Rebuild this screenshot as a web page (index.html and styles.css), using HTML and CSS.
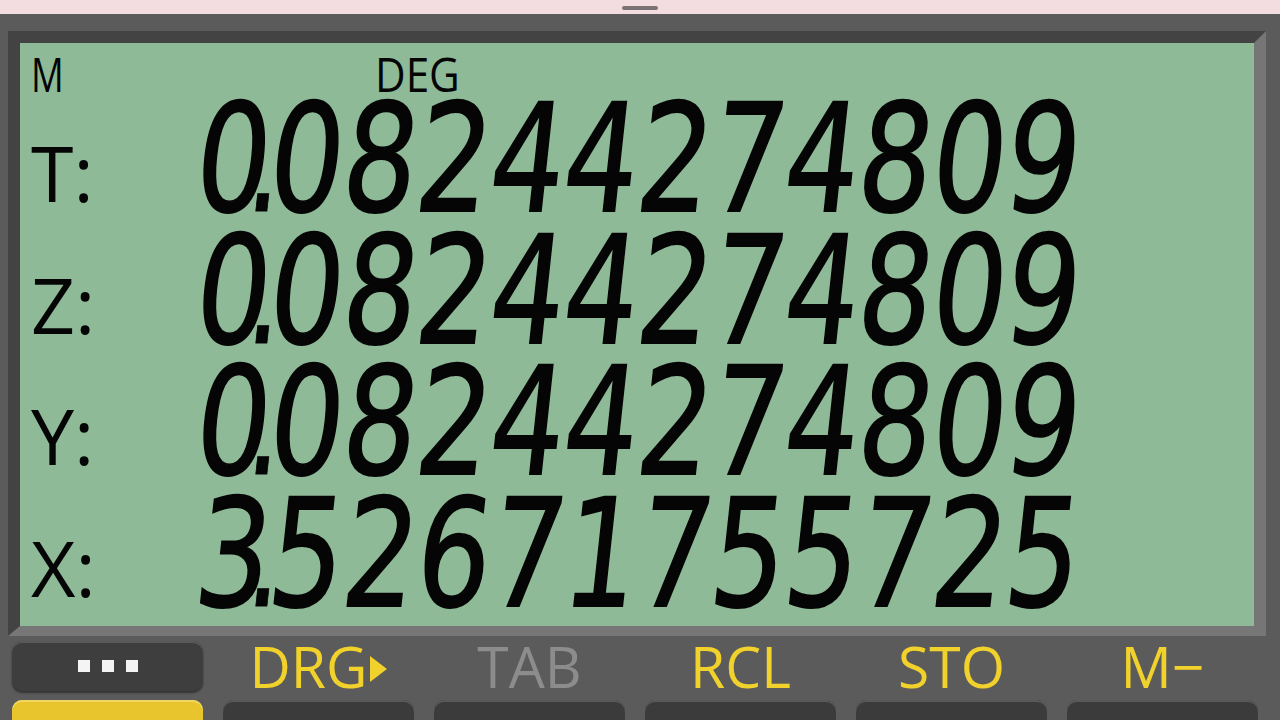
FILE: index.html
```html
<!DOCTYPE html>
<html lang="en">
<head>
<meta charset="utf-8">
<title>RPN Calculator</title>
<link rel="stylesheet" href="styles.css">
</head>
<body>
<div class="topbar"><div class="handle"></div></div>
<div class="frame">
  <div class="lcd">
    <div class="status"><span class="ind-m">M</span><span class="ind-deg">DEG</span></div>
    <div class="row"><span class="reg">T:</span><span class="num">0<span class="dp">.</span>08244274809</span></div>
    <div class="row"><span class="reg">Z:</span><span class="num">0<span class="dp">.</span>08244274809</span></div>
    <div class="row"><span class="reg">Y:</span><span class="num">0<span class="dp">.</span>08244274809</span></div>
    <div class="row"><span class="reg">X:</span><span class="num">3<span class="dp">.</span>52671755725</span></div>
  </div>
</div>
<div class="keys">
  <div class="key menu"><i></i><i></i><i></i></div>
  <div class="lbl yellow">DRG<span class="tri"></span></div>
  <div class="lbl gray">TAB</div>
  <div class="lbl yellow">RCL</div>
  <div class="lbl yellow">STO</div>
  <div class="lbl yellow">M−</div>
</div>
<div class="keys keys2">
  <div class="key top gold"></div>
  <div class="key top"></div>
  <div class="key top"></div>
  <div class="key top"></div>
  <div class="key top"></div>
  <div class="key top"></div>
</div>
</body>
</html>
```

FILE: styles.css
```css
html, body {
  margin: 0;
  padding: 0;
}
body {
  width: 1280px;
  height: 720px;
  overflow: hidden;
  background: #5b5b5b;
  font-family: "Open Sans", "DejaVu Sans", sans-serif;
}
.topbar {
  height: 14px;
  background: #f3dde0;
  display: flex;
  justify-content: center;
  padding-top: 6px;
  box-sizing: border-box;
}
.handle {
  width: 36px;
  height: 4px;
  border-radius: 2px;
  background: #7a7273;
}
.frame {
  margin: 17px 14px 0 8px;
  border-style: solid;
  border-width: 12px 12px 10px 12px;
  border-color: #434343 #767676 #777777 #434343;
}
.lcd {
  height: 583px;
  background: #8fba98;
  padding-left: 11px;
  color: #050505;
}
.status {
  height: 61px;
  line-height: 61px;
  margin-bottom: -10px;
  font-size: 48px;
  display: flex;
  white-space: nowrap;
}
.ind-m {
  display: inline-block;
  width: 344px;
  transform-origin: 0 50%;
  transform: scaleX(0.76);
}
.ind-deg {
  display: inline-block;
  transform-origin: 0 50%;
  transform: scaleX(0.88);
}
.row {
  display: flex;
  height: 131.5px;
  white-space: nowrap;
}
.reg {
  flex: none;
  width: 166px;
  font-size: 77px;
  line-height: 105px;
  padding-top: 26px;
  height: 105px;
}
.num {
  flex: none;
  font-family: "DejaVu Sans", sans-serif;
  font-size: 150px;
  line-height: 131.5px;
  -webkit-text-stroke: 1.8px #050505;
  transform-origin: 0 50%;
  transform: scaleX(0.7715) skewX(-8deg);
}
.dp {
  font-size: 140px;
  margin-left: -27px;
  margin-right: -17.5px;
  -webkit-text-stroke: 1px #050505;
}
.keys {
  display: grid;
  grid-template-columns: repeat(6, 191px);
  column-gap: 20px;
  padding-left: 12px;
  margin-top: 5px;
  height: 50px;
}
.lbl {
  font-size: 57px;
  line-height: 50px;
  text-align: center;
  white-space: nowrap;
}
.yellow { color: #f1d12b; }
.gray { color: #8c8c8c; }
.tri {
  display: inline-block;
  width: 0;
  height: 0;
  border-left: 17px solid #f1d12b;
  border-top: 13px solid transparent;
  border-bottom: 13px solid transparent;
  margin-left: 3px;
  vertical-align: 6px;
}
.key {
  border-radius: 10px;
  background: #3b3b3b;
  box-shadow: inset 0 2px 0 #595959, 0 2px 2px #333;
}
.key.top {
  border-radius: 10px 10px 0 0;
  box-shadow: inset 0 2px 0 #595959;
}
.menu {
  background: #3e3e3e;
  display: flex;
  justify-content: center;
  align-items: center;
  gap: 12px;
}
.menu i {
  display: block;
  width: 12px;
  height: 12px;
  background: #f4f4f4;
}
.keys2 {
  margin-top: 9px;
  height: 20px;
}
.key.gold {
  background: #e8c52c;
  box-shadow: inset 0 2px 0 #f0d660;
}
```
